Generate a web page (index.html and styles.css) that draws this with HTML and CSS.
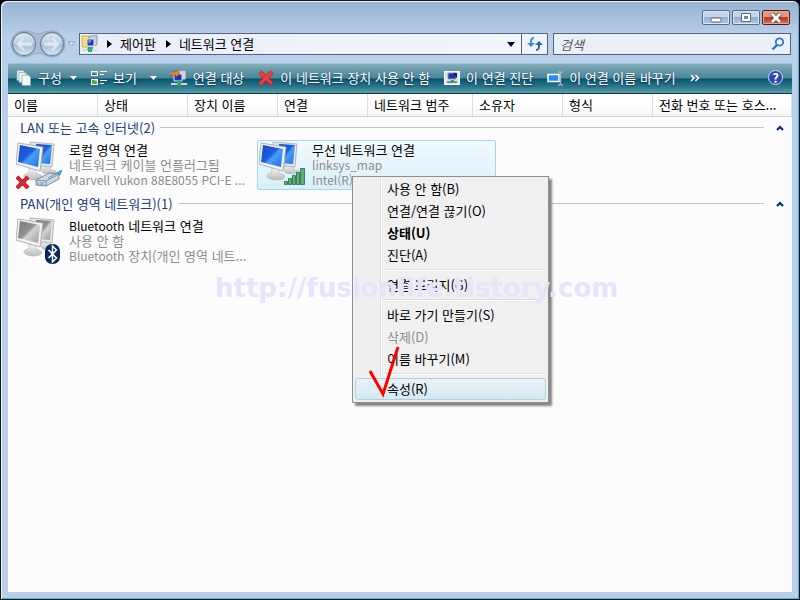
FILE: index.html
```
<!DOCTYPE html>
<html lang="ko">
<head>
<meta charset="utf-8">
<title>네트워크 연결</title>
<link rel="stylesheet" href="styles.css">
</head>
<body>
<svg class="defs" width="0" height="0" aria-hidden="true">
  <defs>
    <linearGradient id="screen" x1="0" y1="0" x2="1" y2="1">
      <stop offset="0" stop-color="#1c49c8"/><stop offset=".45" stop-color="#1a5fe0"/><stop offset=".55" stop-color="#4c9cf4"/><stop offset="1" stop-color="#1d6fe8"/>
    </linearGradient>
    <linearGradient id="screenOff" x1="0" y1="0" x2="1" y2="1">
      <stop offset="0" stop-color="#777"/><stop offset=".45" stop-color="#929292"/><stop offset=".55" stop-color="#d4d4d4"/><stop offset="1" stop-color="#9a9a9a"/>
    </linearGradient>
    <linearGradient id="stand" x1="0" y1="0" x2="0" y2="1">
      <stop offset="0" stop-color="#f6f6f6"/><stop offset="1" stop-color="#b9bbbd"/>
    </linearGradient>
    <linearGradient id="orb" x1="0" y1="0" x2="0" y2="1">
      <stop offset="0" stop-color="#dfe9f3"/><stop offset=".48" stop-color="#bccfe0"/><stop offset=".52" stop-color="#a3bbd1"/><stop offset="1" stop-color="#d6e8f6"/>
    </linearGradient>
    <g id="bodies">
      <path d="M27 24l7 1 1 4 5 1c1 2-8 4-13 2l-3-3z" fill="url(#stand)" stroke="#b4b6b8" stroke-width=".6"/>
      <path d="M14 1l24 2-2 23-20-2z" fill="#e4e5e6" stroke="#a7a9ab" stroke-width=".8"/>
      <path d="M13 27l7 1 0 4 5 2c3 3-3 5-8 5-6 0-10-3-9-5l5-3z" fill="url(#stand)" stroke="#b4b6b8" stroke-width=".6"/>
    </g>
  </defs>
</svg>

<div class="window">
  <header class="titlebar">
    <button class="caption" aria-label="최소화"><svg width="14" height="12" viewBox="0 0 14 12"><rect x="2" y="6" width="10" height="4" rx="1" fill="#fff" stroke="#566a80"/></svg></button>
    <button class="caption" aria-label="최대화"><svg width="14" height="12" viewBox="0 0 14 12"><path d="M2.500 1.500h9v8h-9z" fill="#fff" stroke="#566a80"/><path d="M5.500 4.500h3v2h-3z" fill="#9db7d3" stroke="#566a80"/></svg></button>
    <button class="caption close" aria-label="닫기"><svg width="14" height="12" viewBox="0 0 14 12"><path d="M3 2l8 8M11 2l-8 8" stroke="#703434" stroke-width="4.500"/><path d="M3 2l8 8M11 2l-8 8" stroke="#fff" stroke-width="2.800"/></svg></button>
  </header>

  <nav class="navrow">
    <svg class="orbs" width="70" height="30" viewBox="0 0 70 30" role="img" aria-label="뒤로 앞으로">
      <path d="M14 2h1c7 0 9 3 13 3s6-3 13-3h1a13 13 0 010 26c-6 0-8-4-14-4s-8 4-14 4a13 13 0 010-26z" fill="#a9bfd8" stroke="#8fa6bf"/>
      <circle cx="14" cy="15" r="11.500" fill="url(#orb)" stroke="#74879c" stroke-width="1.300"/>
      <circle cx="42" cy="15" r="11.500" fill="url(#orb)" stroke="#74879c" stroke-width="1.300"/>
      <path d="M6 15l7-7h3l-4 5h10v4H12l4 5h-3z" fill="#dde8f1" stroke="#bccddc" stroke-width=".6"/>
      <path d="M50 15l-7-7h-3l4 5H34v4h10l-4 5h3z" fill="#dde8f1" stroke="#bccddc" stroke-width=".6"/>
      <path d="M58 13h7l-3.500 4z" fill="#e2edf8" stroke="#8ba3bf"/>
    </svg>
    <div class="address">
      <svg width="18" height="18" viewBox="0 0 18 18" aria-hidden="true">
        <path d="M1 1h6l1 2v9H1z" fill="#f2dc6c" stroke="#c9a93e" stroke-width=".8"/>
        <path d="M8 1l8-.5v9L13 11H9z" fill="#c5d0dc" stroke="#7d8b9a" stroke-width=".8"/>
        <path d="M6 4h7v7H6z" fill="#2337bd" stroke="#dfe6ee"/>
        <path d="M7 5l4 0-3 4z" fill="#6a8df0"/>
        <path d="M8 12h3v2h5v2H1v-2h7z" fill="#d7dbdf"/><path d="M7 12h5v2h-1v3H7v-2H6z" fill="#27b264"/>
      </svg>
      <svg width="5" height="8" viewBox="0 0 5 8" aria-hidden="true"><path d="M0 0l5 4-5 4z"/></svg>
      <a href="#">제어판</a>
      <svg width="5" height="8" viewBox="0 0 5 8" aria-hidden="true"><path d="M0 0l5 4-5 4z"/></svg>
      <a href="#">네트워크 연결</a>
      <button class="drop" aria-label="이전 위치"><svg width="8" height="5" viewBox="0 0 8 5"><path d="M0 0h8L4 5z"/></svg></button>
    </div>
    <button class="refresh" aria-label="새로 고침"><svg width="16" height="16" viewBox="0 0 16 16"><path d="M7 2C4 2 4 4 4 8" fill="none" stroke="#3b8fc6" stroke-width="2"/><path d="M0 7h8l-4 4z" fill="#3b8fc6"/><path d="M9 14c3 0 3-2 3-6" fill="none" stroke="#2c62a6" stroke-width="2"/><path d="M8 9h8l-4-4z" fill="#2c62a6"/></svg></button>
    <label class="search">
      <input type="text" placeholder="검색" aria-label="검색">
      <svg width="14" height="14" viewBox="0 0 14 14" aria-hidden="true"><circle cx="8.500" cy="5" r="3.700" fill="#eaf5ff" stroke="#3673bd" stroke-width="1.800"/><path d="M6 8l-4.500 4.500" stroke="#3673bd" stroke-width="2.400"/></svg>
    </label>
  </nav>

  <main class="client">
    <div class="toolbar">
      <button class="tool"><svg width="16" height="16" viewBox="0 0 16 16"><g fill="#f4f7f8" stroke="#8eaab5" stroke-width=".8"><path d="M1 .5h6l2 2v8H1z"/><path d="M3 2.500h6l2 2v8H3z"/><path d="M6 5h6l2.500 2v8.500H6z"/></g></svg>구성<svg class="arrow" width="7" height="4" viewBox="0 0 7 4"><path d="M0 0h7L3.500 4z"/></svg></button>
      <button class="tool view"><svg width="16" height="16" viewBox="0 0 16 16"><path d="M0 1h7v5H0zM0 9h7v6H0z" fill="#fff"/><path d="M1 2h5v3H1z" fill="#69aecb"/><path d="M1 4l2-1 3 2H1z" fill="#255d8c"/><path d="M1 10h5v4H1z" fill="#58a641"/><path d="M3 10h3v2z" fill="#e1c94f"/><path d="M9 1.500h7M9 4.500h4M9 10.500h7M9 13.500h4" stroke="#fff"/></svg>보기<svg class="arrow" width="7" height="4" viewBox="0 0 7 4"><path d="M0 0h7L3.500 4z"/></svg></button>
      <button class="tool"><svg width="16" height="16" viewBox="0 0 16 16"><path d="M7 1l8-1v9l-4 1z" fill="#ccd4df" stroke="#75879c" stroke-width=".7"/><path d="M3 4h8v7H3z" fill="#2335b2" stroke="#e3e8ee"/><path d="M0 2h5V0l4 3.500L5 7V5H0z" fill="#f28a22" stroke="#a5530e" stroke-width=".6"/><path d="M0 13h16v2H0z" fill="#cfd6d8"/><path d="M6 11h4v5H6z" fill="#25ae5b"/></svg>연결 대상</button>
      <button class="tool"><svg width="16" height="16" viewBox="0 0 16 16"><path d="M2 2l12 12M14 2L2 14" stroke="#9d1d20" stroke-width="4.500"/><path d="M2 2l12 12M14 2L2 14" stroke="#f03a3e" stroke-width="3.200"/></svg>이 네트워크 장치 사용 안 함</button>
      <button class="tool"><svg width="16" height="16" viewBox="0 0 16 16"><path d="M.5 1.500h15v13H.5z" fill="#dfe5ea" stroke="#fff"/><path d="M4 3h8v6H4z" fill="#1f2fb0" stroke="#8ea0bb"/><path d="M9 3h4v5z" fill="#1b1b4a"/><path d="M3 12h10" stroke="#7b8d94" stroke-width="2"/><path d="M7 10h3v3H6z" fill="#25ae5b"/></svg>이 연결 진단</button>
      <button class="tool"><svg width="16" height="16" viewBox="0 0 16 16"><path d="M1 4.500h11v7H1z" fill="#1f8df5" stroke="#fff" stroke-width="1.500"/><path d="M11 2h1.500l1 1 1-1H16M13.500 3v11M11 15h1.500l1-1 1 1H16" fill="none" stroke="#a8b2ba" stroke-width="1.500"/></svg>이 연결 이름 바꾸기</button>
      <button class="tool" aria-label="추가 명령"><svg width="10" height="8" viewBox="0 0 10 8"><path d="M1 1l3 3-3 3M5.500 1l3 3-3 3" fill="none" stroke="#fff" stroke-width="1.500"/></svg></button>
      <button class="help" aria-label="도움말">?</button>
    </div>

    <div class="columns">
      <button>이름</button><button>상태</button><button>장치 이름</button><button>연결</button><button>네트워크 범주</button><button>소유자</button><button>형식</button><button>전화 번호 또는 호스...</button>
    </div>

    <div class="list">
      <section>
        <h2><span>LAN 또는 고속 인터넷(2)</span><svg width="8" height="6" viewBox="0 0 8 6" aria-hidden="true"><path d="M1 5l3-3 3 3" fill="none" stroke="#0a2d85" stroke-width="2.200"/></svg></h2>
        <div class="tiles">
          <article class="tile">
            <svg width="48" height="48" viewBox="0 0 48 48" aria-hidden="true">
              <use href="#bodies"/><path d="M20 3l16 1-2 19-13-1z" fill="url(#screen)"/>
              <path d="M2 2l25 4-3 24L0 23z" fill="#f2f2f2" stroke="#a9abad" stroke-width=".9"/><path d="M4 4l20 4-2 18L2 21z" fill="url(#screen)"/>
              <path d="M1 36l11 11M12 36L1 47" stroke="#8d1419" stroke-width="4"/><path d="M1 36l11 11M12 36L1 47" stroke="#e5262d" stroke-width="2.600"/>
              <path d="M36 34l10-5-2 5-7 4z" fill="#4ba9d8" stroke="#2d7da9" stroke-width=".6"/>
              <path d="M20 39l13-7 10 1v5l-13 7-10-1z" fill="#cbd8e6" stroke="#5f7690" stroke-width=".8"/><path d="M20 39l10 1 13-7M30 40v5M22 41v3M25 41v3M27 41v3M32 37l8-4" fill="none" stroke="#6c839c" stroke-width=".8"/>
            </svg>
            <div><h3>로컬 영역 연결</h3><p>네트워크 케이블 언플러그됨</p><p class="en">Marvell Yukon 88E8055 PCI-E ...</p></div>
          </article>
          <article class="tile selected">
            <svg width="48" height="48" viewBox="0 0 48 48" aria-hidden="true">
              <use href="#bodies"/><path d="M20 3l16 1-2 19-13-1z" fill="url(#screen)"/>
              <path d="M2 2l25 4-3 24L0 23z" fill="#f2f2f2" stroke="#a9abad" stroke-width=".9"/><path d="M4 4l20 4-2 18L2 21z" fill="url(#screen)"/>
              <g fill="#62ad79" stroke="#2c7a48" stroke-width=".9"><path d="M25.500 40.500h3v3h-3zM29.500 37.500h3v6h-3zM33.500 34.500h3v9h-3zM37.500 31.500h3v12h-3zM41.500 27.500h4v16h-4z"/></g>
            </svg>
            <div><h3>무선 네트워크 연결</h3><p class="en">linksys_map</p><p class="en">Intel(R)</p></div>
          </article>
        </div>
      </section>
      <section>
        <h2><span>PAN(개인 영역 네트워크)(1)</span><svg width="8" height="6" viewBox="0 0 8 6" aria-hidden="true"><path d="M1 5l3-3 3 3" fill="none" stroke="#0a2d85" stroke-width="2.200"/></svg></h2>
        <div class="tiles">
          <article class="tile">
            <svg width="48" height="48" viewBox="0 0 48 48" aria-hidden="true">
              <use href="#bodies"/><path d="M20 3l16 1-2 19-13-1z" fill="url(#screenOff)"/>
              <path d="M2 2l25 4-3 24L0 23z" fill="#f2f2f2" stroke="#a9abad" stroke-width=".9"/><path d="M4 4l20 4-2 18L2 21z" fill="url(#screenOff)"/>
              <rect x="29" y="27" width="15" height="20" rx="7" fill="#0b2858"/><path d="M32.500 33l8 8-4 4V29l4 4-8 8" fill="none" stroke="#fff" stroke-width="1.500"/>
            </svg>
            <div><h3><span class="en">Bluetooth</span> 네트워크 연결</h3><p>사용 안 함</p><p><span class="en">Bluetooth</span> 장치(개인 영역 네트...</p></div>
          </article>
        </div>
      </section>
    </div>
  </main>

  <div class="menu" role="menu">
    <button role="menuitem">사용 안 함(B)</button>
    <button role="menuitem">연결/연결 끊기(O)</button>
    <button role="menuitem" class="default">상태(U)</button>
    <button role="menuitem">진단(A)</button>
    <hr>
    <button role="menuitem">연결 브리지(G)</button>
    <hr>
    <button role="menuitem">바로 가기 만들기(S)</button>
    <button role="menuitem" disabled>삭제(D)</button>
    <button role="menuitem">이름 바꾸기(M)</button>
    <hr>
    <button role="menuitem" class="hot">속성(R)</button>
  </div>
  <svg class="check" width="36" height="54" viewBox="0 0 36 54" aria-hidden="true"><path d="M3 26l13 23L31 2" fill="none" stroke="#f00" stroke-width="3"/></svg>
  <div class="watermark">http://fusionlife.tistory.com</div>
</div>
</body>
</html>
```
FILE: styles.css
```
* { box-sizing: border-box; }
body, h2, h3, p { margin: 0; }
body {
  background: #000;
  color: #000;
  font: 13px/15px "Noto Sans CJK KR", "Noto Sans", sans-serif;
}
button, input { font: inherit; color: inherit; border: 0; padding: 0; background: none; }
a { color: inherit; text-decoration: none; }
svg { flex: none; }
.defs { position: absolute; }
.en { font-size: 12px; }

.window {
  position: relative;
  display: flex;
  flex-direction: column;
  min-height: 100vh;
  padding: 0 6px 6px;
  border: 1px solid #10181f;
  border-radius: 7px 7px 0 0;
  background: linear-gradient(#98b1d0, #b9d0ea 36px, #bad0e9);
  box-shadow: inset 1px 1px #eef5fc, inset -1px -1px #4fb3cf;
}

.titlebar { display: flex; justify-content: flex-end; gap: 2px; padding: 9px 3px 0; height: 32px; }
.caption {
  display: flex;
  align-items: center;
  justify-content: center;
  width: 28px;
  height: 15px;
  border: 1px solid #566b85;
  border-radius: 2px;
  background: linear-gradient(#c3d5e8 50%, #93afcc 50%, #b4cce4);
  box-shadow: inset 0 0 0 1px #d9e6f3;
}
.close { background: linear-gradient(#dd9787 50%, #b63c25 50%, #d0705a); border-color: #571a1a; box-shadow: inset 0 0 0 1px #e5ab9f; }

.navrow { display: flex; align-items: center; height: 22px; margin-bottom: 8px; padding: 0 2px; }
.orbs { margin: 0 -1px 0 1px; }
.address {
  flex: 1;
  display: flex;
  align-items: center;
  gap: 8px;
  height: 22px;
  padding-left: 1px;
  border: 1px solid #56637a;
  background: linear-gradient(90deg, #e8eefa, #f1f5fc);
}
.address a { padding: 0 2px 2px 0; }
.drop { width: 20px; margin-left: auto; fill: #000033; display: grid; place-items: center; }
.refresh { width: 26px; height: 22px; border: 1px solid #56637a; border-left: 0; background: #eef4fc; display: grid; place-items: center; }
.search {
  display: flex;
  align-items: center;
  width: 238px;
  height: 22px;
  margin-left: 5px;
  padding: 0 5px 0 6px;
  border: 1px solid #56637a;
  background: #e9f0fa;
}
.search input { flex: 1; min-width: 0; font-style: italic; outline: 0; }
.search input::placeholder { color: #555; opacity: 1; }

.client { flex: 1; display: flex; flex-direction: column; margin: 0 1px 1px; background: #fcfcfc; }
.toolbar {
  display: flex;
  align-items: center;
  gap: 14px;
  height: 31px;
  padding: 0 9px 2px 8px;
  border-top: 1px solid #a5bfd0;
  border-bottom: 1px solid #0a3440;
  color: #fff;
  white-space: nowrap;
  background: linear-gradient(#82adba, #4b8598 48%, #095370 52%, #2e7a8d 80%, #5fa0aa);
}
.tool { display: flex; align-items: center; gap: 6px; text-shadow: 0 1px 2px #053344; }
.arrow { fill: #fff; margin-left: 2px; }
.view .arrow { margin-left: 7px; }
.help {
  width: 15px;
  height: 15px;
  margin-left: auto;
  border: 1px solid #d5def2;
  border-radius: 50%;
  background: #2a49b4;
  font-weight: 700;
  line-height: 13px;
}

.columns {
  display: grid;
  grid-template-columns: 90px 90px 90px 90px 105px 90px 90px 1fr;
  height: 23px;
  border-bottom: 1px solid #d5d5d5;
  background: linear-gradient(#fff 50%, #f4f5f6);
}
.columns button { padding: 0 0 1px 6px; border-right: 1px solid #dcdddf; text-align: left; white-space: nowrap; }

.list { display: grid; gap: 4px; padding: 1px 8px 0 6px; }
h2 { display: flex; align-items: center; gap: 12px; height: 20px; margin: 0 0 2px 6px; color: #1c3a80; font-size: 13px; font-weight: 400; }
h2 span { flex: 1; display: flex; align-items: center; gap: 5px; height: 18px; margin-bottom: 2px; }
h2 span::after { content: ""; flex: 1; height: 1px; background: #b9c5dc; }
.tiles { display: flex; gap: 4px; }
.tile { display: flex; align-items: center; gap: 5px; width: 239px; height: 50px; padding-left: 1px; border: 1px solid transparent; border-radius: 2px; white-space: nowrap; }
.tile div { padding-bottom: 2px; }
.tile p { color: #8c8c8c; }
.selected { border-color: #a4d8e8; background: linear-gradient(#f2fafd, #d8f0fa); }
h3 { font-size: 13px; font-weight: 400; }

.menu {
  position: absolute;
  left: 351px;
  top: 175px;
  width: 197px;
  padding: 1px 2px 2px;
  border: 1px solid #8f8f8f;
  background: linear-gradient(90deg, #efefef 27px, #dedede 27px 28px, #fff 28px 29px, #f0f0f0 29px);
  box-shadow: 3px 3px 2px #858585;
}
.menu button { display: block; width: 100%; height: 22px; padding: 0 0 2px 32px; border-radius: 3px; text-align: left; }
.menu button:disabled { color: #8e8e8e; }
.menu .default { font-weight: 700; }
.menu .hot { border: 1px solid #a9d5e3; padding-left: 31px; background: linear-gradient(#e8f2f6, #d5eaf2); }
.menu hr { height: 2px; margin: 3px 0 3px 28px; border: 0; border-top: 1px solid #dedede; background: #fff; }
.check { position: absolute; left: 366px; top: 344px; }
.watermark {
  position: absolute;
  left: 214px;
  top: 272px;
  color: #e4e4fa;
  font: bold 26px/30px "DejaVu Sans", sans-serif;
}
```
